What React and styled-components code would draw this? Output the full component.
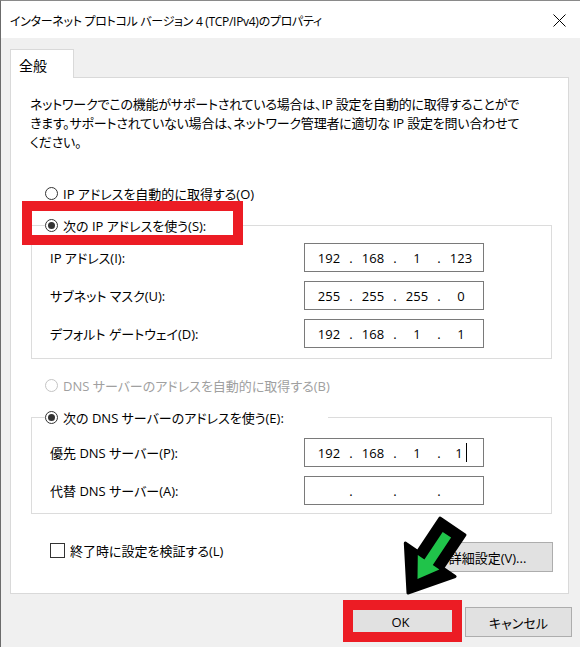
import React from "react";
import styled, { createGlobalStyle } from "styled-components";

const GlobalStyle = createGlobalStyle`
  html, body {
    margin: 0;
    padding: 0;
    background: #f0f0f0;
  }
  * {
    box-sizing: border-box;
  }
`;

const Window = styled.div`
  position: relative;
  width: 580px;
  height: 647px;
  overflow: hidden;
  background: #f0f0f0;
  border-left: 1px solid #6b6b6b;
  border-top: 1px solid #8a8a8a;
  font-family: "Open Sans", "Noto Sans CJK JP", sans-serif;
  font-feature-settings: "palt" 1;
  font-size: 13px;
  color: #000;
`;

const TitleBar = styled.div`
  display: flex;
  align-items: center;
  justify-content: space-between;
  height: 37px;
  padding: 2px 14px 0 9px;
  background: #fff;
`;

const Title = styled.span`
  font-size: 12px;
  letter-spacing: -0.3px;
`;

const CloseButton = styled.span`
  display: flex;
  width: 13px;
  height: 13px;
`;

const Body = styled.div`
  padding: 11px 8px 0 9px;
`;

const TabStrip = styled.div`
  display: flex;
`;

const Tab = styled.div`
  position: relative;
  z-index: 1;
  width: 64px;
  height: 29px;
  margin-bottom: -1px;
  padding: 5px 0 0 8px;
  background: #fff;
  border: 1px solid #d9d9d9;
  border-bottom: none;
  font-size: 14px;
`;

const Panel = styled.div`
  width: 559px;
  height: 517px;
  padding: 17px 15px 0 19px;
  background: #fff;
  border: 1px solid #d9d9d9;
`;

const Description = styled.p`
  margin: 0;
  line-height: 19px;
  white-space: nowrap;
  letter-spacing: -0.2px;
`;

const Line = styled.span`
  display: block;
`;

const RadioRow = styled.label`
  display: flex;
  align-items: center;
  gap: 5px;
  height: 20px;
  margin: ${(p) => p.$margin || 0};
  color: ${(p) => (p.$disabled ? "#a0a0a0" : "#000")};
  white-space: nowrap;
`;

const RadioMark = styled.span`
  display: flex;
  align-items: center;
  justify-content: center;
  width: 13px;
  height: 13px;
  border-radius: 50%;
  border: 1px solid ${(p) => (p.$disabled ? "#c4c4c4" : "#333")};
  background: #fff;
  flex: none;
  &::after {
    content: "";
    display: ${(p) => (p.$checked ? "block" : "none")};
    width: 7px;
    height: 7px;
    border-radius: 50%;
    background: #333;
  }
`;

const Group = styled.fieldset`
  width: 521px;
  min-width: 0;
  margin: ${(p) => p.$margin || 0};
  padding: 0 0 ${(p) => p.$bottom}px 13px;
  border: 1px solid #dcdcdc;
`;

const GroupLegend = styled.legend`
  position: relative;
  width: ${(p) => p.$width}px;
  padding: 0;
`;

const FieldGrid = styled.div`
  display: grid;
  grid-template-columns: 254px 180px;
  grid-auto-rows: 29px;
  row-gap: 9px;
  align-items: center;
  margin-top: ${(p) => p.$top}px;
  padding-left: 5px;
`;

const FieldLabel = styled.span`
  white-space: nowrap;
`;

const IpBox = styled.div`
  display: flex;
  align-items: center;
  height: 29px;
  padding-left: 5px;
  background: #fff;
  border: 1px solid #7a7a7a;
`;

const Octet = styled.span`
  display: flex;
  justify-content: center;
  align-items: center;
  width: 38px;
`;

const Dot = styled.span`
  width: 6px;
  text-align: center;
`;

const Caret = styled.span`
  display: inline-block;
  width: 1px;
  height: 19px;
  margin-left: 3px;
  background: #000;
`;

const OptionsRow = styled.div`
  display: flex;
  justify-content: space-between;
  align-items: flex-start;
  margin-top: 26px;
  padding-left: 20px;
`;

const CheckRow = styled.label`
  display: flex;
  align-items: center;
  gap: 5px;
  height: 20px;
`;

const CheckBox = styled.span`
  width: 15px;
  height: 15px;
  border: 1px solid #333;
  background: #fff;
`;

const DialogButton = styled.button`
  position: relative;
  width: ${(p) => p.$width}px;
  height: 30px;
  margin-top: ${(p) => p.$top || 0}px;
  padding: 0;
  font: inherit;
  color: #000;
  background: #e1e1e1;
  border: 1px solid ${(p) => (p.$default ? "#0078d7" : "#adadad")};
`;

const ButtonBar = styled.div`
  display: flex;
  justify-content: flex-end;
  gap: 11px;
  margin-top: 13px;
`;

const Highlight = styled.span`
  position: absolute;
  left: ${(p) => p.$left}px;
  top: ${(p) => p.$top}px;
  width: ${(p) => p.$w}px;
  height: ${(p) => p.$h}px;
  border: 10px solid #ec1c24;
  pointer-events: none;
`;

const ArrowMark = styled.svg`
  position: absolute;
  left: 394px;
  top: 509px;
  width: 80px;
  height: 90px;
`;

const IpField = ({ value, caret }) => (
  <IpBox>
    {value.map((v, i) => (
      <React.Fragment key={i}>
        {i > 0 && <Dot>.</Dot>}
        <Octet>
          {v}
          {caret && i === 3 && <Caret />}
        </Octet>
      </React.Fragment>
    ))}
  </IpBox>
);

const App = () => {
  return (
    <>
      <GlobalStyle />
      <Window>
        <TitleBar>
          <Title>インターネット プロトコル バージョン 4 (TCP/IPv4)のプロパティ</Title>
          <CloseButton>
            <svg width="13" height="13" viewBox="0 0 13 13">
              <path d="M0.5 0.5 L12.5 12.5 M12.5 0.5 L0.5 12.5" stroke="#000" strokeWidth="1" />
            </svg>
          </CloseButton>
        </TitleBar>
        <Body>
          <TabStrip>
            <Tab>全般</Tab>
          </TabStrip>
          <Panel>
            <Description>
              <Line>ネットワークでこの機能がサポートされている場合は、IP 設定を自動的に取得することがで</Line>
              <Line>きます。サポートされていない場合は、ネットワーク管理者に適切な IP 設定を問い合わせて</Line>
              <Line>ください。</Line>
            </Description>

            <RadioRow $margin="31px 0 0 15px">
              <RadioMark />
              IP アドレスを自動的に取得する(O)
            </RadioRow>

            <Group $margin="12px 0 0 1px" $bottom={10}>
              <GroupLegend $width={190}>
                <RadioRow>
                  <RadioMark $checked />
                  次の IP アドレスを使う(S):
                </RadioRow>
                <Highlight $left={-23} $top={-14} $w={221} $h={44} />
              </GroupLegend>
              <FieldGrid $top={8}>
                <FieldLabel>IP アドレス(I):</FieldLabel>
                <IpField value={["192", "168", "1", "123"]} />
                <FieldLabel>サブネット マスク(U):</FieldLabel>
                <IpField value={["255", "255", "255", "0"]} />
                <FieldLabel>デフォルト ゲートウェイ(D):</FieldLabel>
                <IpField value={["192", "168", "1", "1"]} />
              </FieldGrid>
            </Group>

            <RadioRow $margin="16px 0 0 15px" $disabled>
              <RadioMark $disabled />
              DNS サーバーのアドレスを自動的に取得する(B)
            </RadioRow>

            <Group $margin="12px 0 0 1px" $bottom={8}>
              <GroupLegend $width={283}>
                <RadioRow>
                  <RadioMark $checked />
                  次の DNS サーバーのアドレスを使う(E):
                </RadioRow>
              </GroupLegend>
              <FieldGrid $top={11}>
                <FieldLabel>優先 DNS サーバー(P):</FieldLabel>
                <IpField value={["192", "168", "1", "1"]} caret />
                <FieldLabel>代替 DNS サーバー(A):</FieldLabel>
                <IpField value={["", "", "", ""]} />
              </FieldGrid>
            </Group>

            <OptionsRow>
              <CheckRow>
                <CheckBox />
                終了時に設定を検証する(L)
              </CheckRow>
              <DialogButton $width={131} $top={2}>
                詳細設定(V)...
              </DialogButton>
            </OptionsRow>
          </Panel>
          <ButtonBar>
            <DialogButton $width={107} $default>
              OK
              <Highlight $left={-5} $top={-8} $w={119} $h={42} />
            </DialogButton>
            <DialogButton $width={107}>キャンセル</DialogButton>
          </ButtonBar>
        </Body>

        <ArrowMark viewBox="394 509 80 90">
          <polygon
            points="439,517 464,534 441.7,567.1 454.1,575.5 407,592 404.3,542.1 416.7,550.5"
            fill="#000"
            stroke="#000"
            strokeWidth="3"
            strokeLinejoin="round"
          />
          <polygon
            points="441.7,531 450.1,536.6 431.8,564.1 438.4,568.5 416.5,577.9 416.8,554.1 423.4,558.5"
            fill="#20c34a"
          />
        </ArrowMark>
      </Window>
    </>
  );
};

export default App;
